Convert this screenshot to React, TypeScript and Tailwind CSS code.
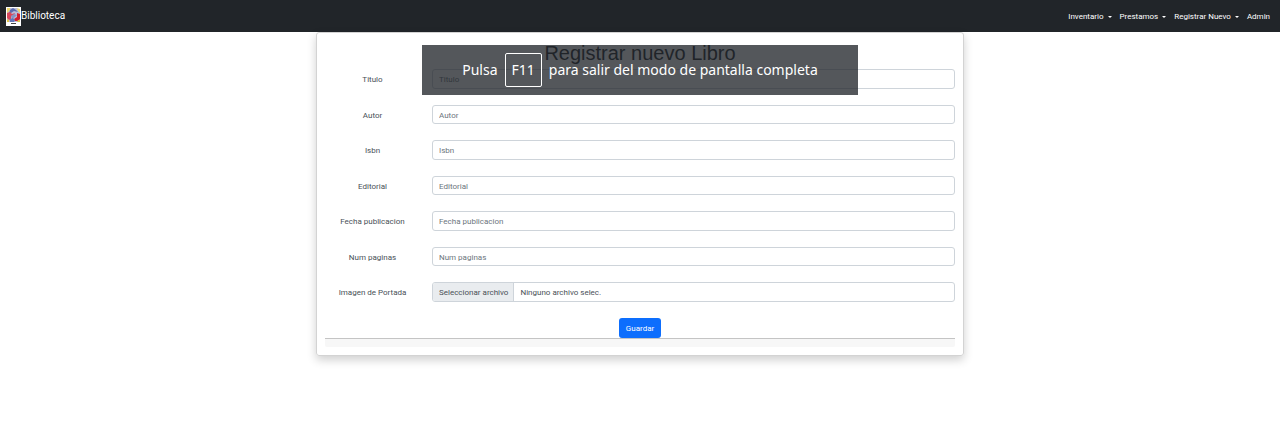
import React from "react";

const fields = [
  { id: "titulo", label: "Titulo" },
  { id: "autor", label: "Autor" },
  { id: "isbn", label: "Isbn" },
  { id: "editorial", label: "Editorial" },
  { id: "fecha", label: "Fecha publicacion" },
  { id: "paginas", label: "Num paginas" },
];

function Logo() {
  return (
    <svg viewBox="0 0 15 19" className="h-[19px] w-[15px]" aria-hidden="true">
      <rect width="15" height="19" fill="#fff" />
      <path d="M1 3l3-2h7l3 2v11l-2 1H3l-2-1z" fill="#b9bcd8" />
      <path d="M1 1h3v2L1 6zM11 1l3 1v4l-2-2z" fill="#ecd66e" />
      <path d="M4 3l3-2 3 2 2 2-4-1-3 2-2 1z" fill="#5b6cb0" />
      <path d="M1 6l3-1 2 2 3-1-1 2-3 1v3l-2 1-2-2z" fill="#d8485c" />
      <path d="M11 6l3 1v5l-2 2H9l-1-2 3-2z" fill="#d11f2f" />
      <path d="M5 9l3-2 3 1-2 2-3 2z" fill="#8793c4" />
      <path d="M4 12l3-1 2 2-1 2H4z" fill="#6476b8" />
      <path d="M1 12l2 1v2H1zM12 13h2v2h-3z" fill="#e3c64b" />
      <rect x="5" y="16" width="5" height="1" fill="#444" />
    </svg>
  );
}

function Caret() {
  return <span className="border-x-2 border-t-2 border-x-transparent border-t-current" />;
}

function NavMenu({ children }: { children: React.ReactNode }) {
  return (
    <button type="button" className="flex items-center gap-1 whitespace-nowrap">
      {children}
      <Caret />
    </button>
  );
}

export default function App() {
  return (
    <div className="min-h-screen bg-white font-['Roboto','Noto_Sans',sans-serif] text-[8px] leading-3 text-[#212529]">
      <header className="flex h-8 items-center justify-between bg-[#212529] pl-1.5 pr-2.5 text-white">
        <a href="#" className="flex items-center text-[10px] leading-4">
          <Logo />
          Biblioteca
        </a>
        <nav className="flex items-center gap-2 pt-px">
          <NavMenu>Inventario</NavMenu>
          <NavMenu>Prestamos</NavMenu>
          <NavMenu>Registrar Nuevo</NavMenu>
          <a href="#">Admin</a>
        </nav>
      </header>

      <main className="mx-auto w-[648px] max-w-full rounded-[3px] border border-[#d3d3d3] px-2 pb-2 pt-2 shadow-[0_4px_10px_rgba(0,0,0,0.19)]">
        <h1 className="mb-1 text-center font-['Liberation_Sans',sans-serif] text-[20px] leading-6">
          Registrar nuevo Libro
        </h1>
        <form onSubmit={(e) => e.preventDefault()}>
          <div className="flex flex-col gap-4 text-[#495057]">
            {fields.map((f) => (
              <div key={f.id} className="flex h-5 even:h-[19px]">
                <label htmlFor={f.id} className="w-[95px] pt-[5px] text-center">
                  {f.label}
                </label>
                <input
                  id={f.id}
                  type="text"
                  placeholder={f.label}
                  className="ml-3 min-w-0 flex-1 rounded-[3px] border border-[#ced4da] bg-white px-1.5 pt-0.5 placeholder:text-[#6c757d] placeholder:opacity-100"
                />
              </div>
            ))}
            <div className="flex h-5">
              <label htmlFor="portada" className="w-[95px] pt-[5px] text-center">
                Imagen de Portada
              </label>
              <label className="relative ml-3 flex min-w-0 flex-1 items-stretch overflow-hidden rounded-[3px] border border-[#ced4da]">
                <input id="portada" type="file" className="sr-only" />
                <span className="flex items-center border-r border-[#ced4da] bg-[#e9ecef] pl-1.5 pr-[5px] pt-px">
                  Seleccionar archivo
                </span>
                <span className="flex items-center px-1.5 pt-px">Ninguno archivo selec.</span>
              </label>
            </div>
          </div>
          <div className="mt-4 flex justify-center">
            <button type="submit" className="h-5 rounded-[3px] bg-[#0d6efd] px-[7px] pt-px text-white">
              Guardar
            </button>
          </div>
        </form>
        <footer className="h-[9px] rounded-b-[2px] border-t border-[#c4c4c4] bg-[#f7f7f7]" />
      </main>

      <div
        role="status"
        className="absolute inset-x-0 top-[45px] mx-auto flex h-[50px] w-fit items-center gap-[7px] whitespace-nowrap bg-[#202429]/77 px-10 font-['Noto_Sans',sans-serif] text-[14px] leading-5 text-white"
      >
        <span>Pulsa</span>
        <kbd className="flex h-[34px] items-center rounded-[2px] border border-white px-1.5 font-['Noto_Sans',sans-serif]">
          F11
        </kbd>
        <span>para salir del modo de pantalla completa</span>
      </div>
    </div>
  );
}
